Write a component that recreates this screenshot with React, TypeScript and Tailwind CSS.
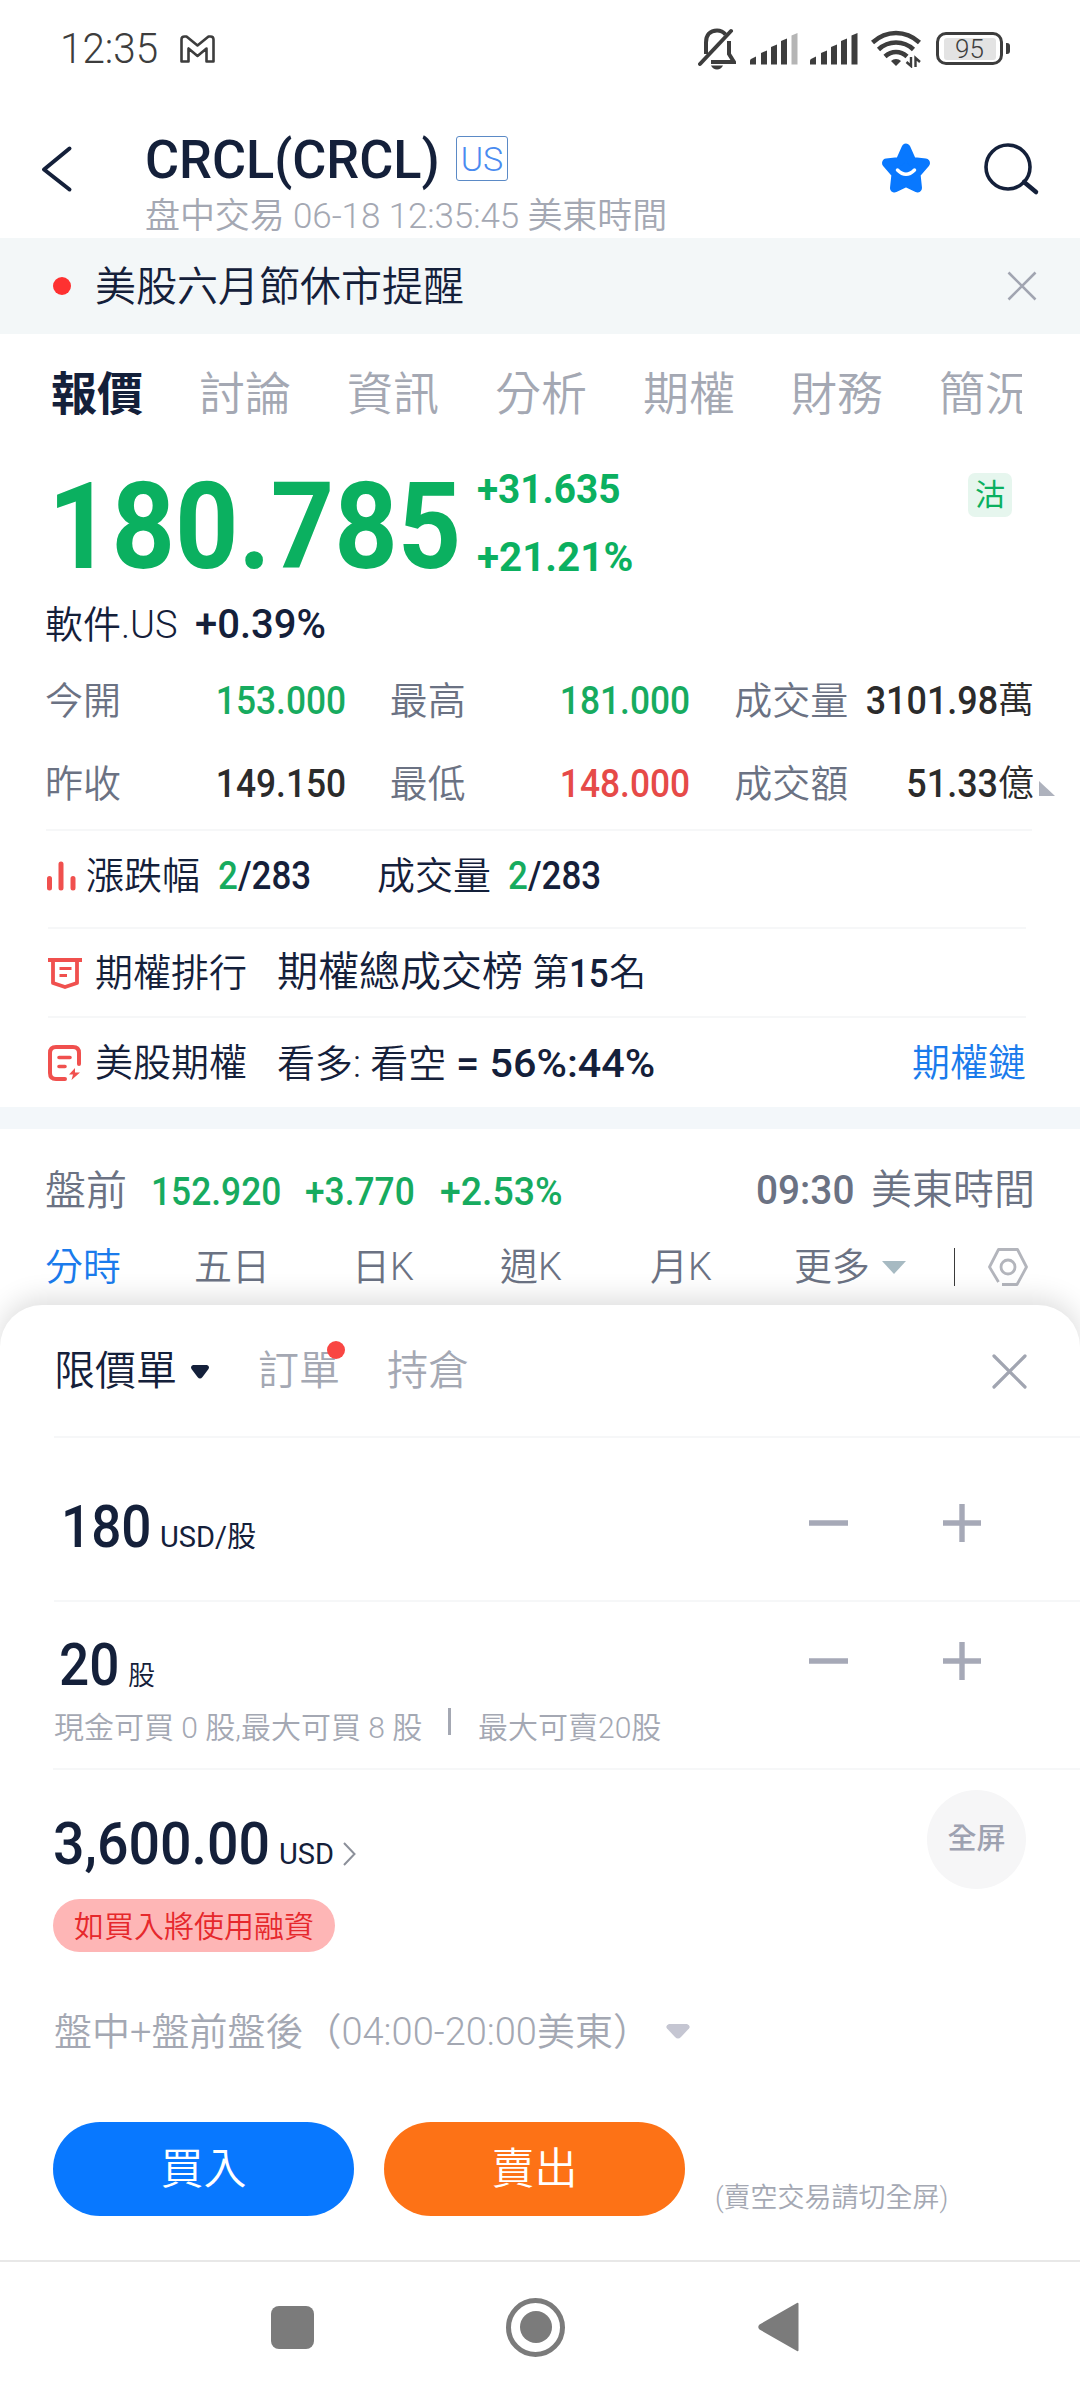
import React from "react";

const tabs = ["報價", "討論", "資訊", "分析", "期權", "財務", "簡況"];

const stats = [
  { label: "今開", value: "153.000", unit: "", color: "text-[#17ab5f]" },
  { label: "最高", value: "181.000", unit: "", color: "text-[#17ab5f]" },
  { label: "成交量", value: "3101.98", unit: "萬", color: "text-[#2b2b2b]" },
  { label: "昨收", value: "149.150", unit: "", color: "text-[#2b2b2b]" },
  { label: "最低", value: "148.000", unit: "", color: "text-[#e64a48]" },
  { label: "成交額", value: "51.33", unit: "億", color: "text-[#2b2b2b]" },
];

interface SignalProps {
  weak?: boolean;
}

const Signal: React.FC<SignalProps> = ({ weak }) => (
  <svg width="48" height="32" viewBox="0 0 48 32" fill="#3d3d3d">
    <path d="M0 31.5v-4q0-1 1-1.6l5-2.4v8z" />
    <path d="M11 31.5V20l6-2.6v14.1z" />
    <path d="M21 31.5V14l6-2.6v20.1z" />
    <path d="M31 31.5V8l6-2.6v26.1z" />
    <path d="M41.500 31.500V2.500l6-2.500v31.500z" fill={weak ? "#b5b5b5" : "#3d3d3d"} />
  </svg>
);

const StatusBar = () => (
  <div className="flex h-[97px] shrink-0 items-center pl-[60px] pr-[70px] text-[#3d3d3d]">
    <span className="w-[120px] origin-left scale-x-[0.94] text-[43px] leading-none">12:35</span>
    <svg width="35" height="28" viewBox="0 0 35 28" fill="none" stroke="#3d3d3d" strokeWidth="2.6" strokeLinejoin="round">
      <path d="M1.500 26.500V4.500q0-3 3-3h2l11 9 11-9h2q3 0 3 3v22h-7v-13l-9 7.500-9-7.500v13z" />
    </svg>
    <div className="ml-auto flex items-center">
      <svg width="38" height="42" viewBox="0 0 38 42" fill="none" stroke="#3d3d3d" strokeWidth="4">
        <path d="M8 26V14.500C8 7 12 2.500 19 2.500c3.500 0 6.500 1.500 8.500 4M31 13v13l5 8H13" />
        <path d="M2 36L33 3" strokeLinecap="round" />
        <path d="M13 37.500h12q-2 4-6 4t-6-4z" fill="#3d3d3d" stroke="none" />
      </svg>
      <span className="ml-[14px]"><Signal weak /></span>
      <span className="ml-[12px]"><Signal /></span>
      <svg className="ml-[13px]" width="50" height="38" viewBox="0 0 50 38" fill="none" stroke="#3d3d3d" strokeWidth="4.600">
        <path d="M1.500 12.500Q12 3 25 3t23.500 9.500M7.500 19.500Q15 12.500 25 12.500t17.500 7M14 26.500Q19 22 25 22t11 4.500" />
        <path d="M25 29q3 0 5 2l-5 5-5-5q2-2 5-2z" fill="#3d3d3d" stroke="none" />
        <path d="M40 27v9l-4.500-4M44.500 37v-9l4.500 4" strokeWidth="2.400" />
      </svg>
      <div className="ml-[15px] flex h-[33px] w-[67px] items-center justify-center rounded-[10px] border-[3px] border-[#3d3d3d]">
        <div className="flex h-[22px] w-[52px] items-center justify-center rounded-[3px] bg-[#e3e3e3] text-[26px] leading-none">95</div>
      </div>
      <div className="ml-[3px] h-[11px] w-[4px] rounded-r-[3px] bg-[#3d3d3d]" />
    </div>
  </div>
);

const Header = () => (
  <header className="flex h-[141px] shrink-0 items-start pl-[40px]">
    <svg className="mt-[48px]" width="34" height="48" viewBox="0 0 34 48" fill="none" stroke="#14203a" strokeWidth="4" strokeLinecap="round" strokeLinejoin="round">
      <path d="M29.500 3.500L4 24.500l25.500 20" />
    </svg>
    <div className="ml-[71px] mt-[33px]">
      <div className="flex h-[57px] items-center">
        <h1 className="w-[311px] origin-left scale-x-[0.985] whitespace-nowrap pt-[3px] text-[53px] font-medium leading-[57px] text-[#14203a]">CRCL(CRCL)</h1>
        <div className="flex h-[45px] w-[52px] items-center justify-center rounded-[3px] border border-[#5b8ac6] text-[34px] leading-none text-[#4a8bf0]">US</div>
      </div>
      <p className="mt-[5px] whitespace-nowrap text-[35px] leading-[50px] tracking-[-0.1px] text-[#a4a8b3]">盘中交易 06-18 12:35:45 美東時間</p>
    </div>
    <div className="ml-auto flex pr-[40px] pt-[45px]">
      <svg width="54" height="54" viewBox="0 0 54 54">
        <path
          d="M27 6l6 13.500 13.500 1.500-9.500 11 1.500 14L27 40.500 15.500 46l1.500-14-9.500-11 13.500-1.500z"
          fill="#0878ff"
          stroke="#0878ff"
          strokeWidth="9"
          strokeLinejoin="round"
        />
        <path d="M18.500 28q8.500 8.500 17 0" fill="none" stroke="#fff" strokeWidth="3.500" strokeLinecap="round" />
      </svg>
      <svg className="ml-[51px]" width="56" height="54" viewBox="0 0 56 54" fill="none" stroke="#14203a" strokeWidth="3.600" strokeLinecap="round">
        <circle cx="24" cy="25" r="22" />
        <path d="M40 40l12 10" strokeWidth="4.500" />
      </svg>
    </div>
  </header>
);

const Notice = () => (
  <div className="flex h-[96px] shrink-0 items-center bg-[#f3f7f8] pl-[53px] pr-[43px]">
    <span className="h-[18px] w-[18px] rounded-full bg-[#fe3131]" />
    <span className="ml-[24px] pt-[2px] text-[41px] leading-none text-[#14203a]">美股六月節休市提醒</span>
    <svg className="ml-auto" width="30" height="30" viewBox="0 0 30 30" stroke="#a1a5b1" strokeWidth="2.600">
      <path d="M1.500 1.500l27 27M28.500 1.500l-27 27" />
    </svg>
  </div>
);

const Quote = () => (
  <section className="shrink-0 text-[#14203a]">
    <nav className="ml-[51px] flex h-[120px] w-[971px] items-center overflow-hidden whitespace-nowrap text-[46px] leading-none text-[#a4a8b3]">
      {tabs.map((tab, i) => (
        <span key={tab} className={i === 0 ? "w-[148px] shrink-0 font-bold text-[#14203a]" : "w-[148px] shrink-0"}>
          {tab}
        </span>
      ))}
    </nav>

    <div className="flex h-[135px] pl-[48px] pr-[68px] font-bold text-[#0bb060]">
      <span className="w-[429px] origin-left scale-x-[0.915] whitespace-nowrap text-[121px] leading-[146px]">180.785</span>
      <div className="flex flex-col whitespace-nowrap pt-px text-[41px] leading-[68px]">
        <span className="origin-left scale-x-[0.945]">+31.635</span>
        <span className="origin-left scale-x-[0.985]">+21.21%</span>
      </div>
      <span className="ml-auto mt-[19px] flex h-[44px] w-[44px] items-center justify-center rounded-[7px] bg-[#e6f6ee] text-[30px] font-normal leading-none">沽</span>
    </div>

    <div className="flex h-[68px] items-center pl-[45px] pt-[3px] text-[38px] leading-none">
      <span className="w-[150px]">軟件.US</span>
      <span className="text-[40px] font-medium">+0.39%</span>
    </div>

    <div className="relative grid h-[172px] grid-cols-3 content-start gap-x-[45px] pl-[45px] pr-[46px] pt-[3px] text-[38px] leading-[83px]">
      {stats.map((s) => (
        <div key={s.label} className={`flex whitespace-nowrap ${s.color}`}>
          <span className="mr-auto text-[#6b7283]">{s.label}</span>
          <span className={s.unit ? "origin-right scale-x-[0.945] font-medium" : "origin-right translate-x-px scale-x-[0.93] font-medium"}>{s.value}</span>
          {s.unit && <span className="text-[36px]">{s.unit}</span>}
        </div>
      ))}
      <svg className="absolute right-[25px] top-[124px]" width="16" height="15" viewBox="0 0 16 15" fill="#aeb2bd">
        <path d="M0 0l16 15H0z" />
      </svg>
    </div>

    <div className="ml-[46px] mr-[48px] flex h-[98px] items-center border-t-2 border-[#f6f7f8] pb-[7px] text-[38px] leading-none">
      <svg width="30" height="30" viewBox="0 0 30 30" stroke="#f0504e" strokeWidth="5" strokeLinecap="round">
        <path d="M3.500 17.500v9.500M15 3v24M27 17.500v9.500" />
      </svg>
      <span className="ml-[10px] w-[132px]">漲跌幅</span>
      <span className="w-[159px] origin-left scale-x-[0.92] font-medium">
        <span className="text-[#17ab5f]">2</span>/283
      </span>
      <span className="w-[131px]">成交量</span>
      <span className="origin-left scale-x-[0.92] font-medium">
        <span className="text-[#17ab5f]">2</span>/283
      </span>
    </div>

    <div className="ml-[48px] mr-[54px] flex h-[89px] items-center border-t-2 border-[#f6f7f8] text-[38px] leading-none">
      <svg width="34" height="32" viewBox="0 0 34 32" fill="none" stroke="#f0504e" strokeWidth="3.800" strokeLinejoin="round">
        <path d="M0 3h34" />
        <path d="M5 3v23l12 4 12-4V3" />
        <path d="M11.500 11.500h12M11.500 18.500h7.500" strokeWidth="3" />
      </svg>
      <span className="ml-[13px] w-[182px]">期權排行</span>
      <span className="text-[41px]">期權總成交榜</span>
      <span className="ml-[9px] pt-[2px] text-[37px]">第</span>
      <span className="origin-left scale-x-[0.92] pt-[3px] font-medium">15</span>
      <span className="-ml-[3px] pt-[2px] text-[37px]">名</span>
    </div>

    <div className="ml-[48px] mr-[54px] flex h-[91px] items-center border-t-2 border-[#f6f7f8] text-[38px] leading-none">
      <svg width="34" height="36" viewBox="0 0 34 36" fill="none" stroke="#f0504e" strokeWidth="4" strokeLinecap="round" strokeLinejoin="round">
        <path d="M31 19V8q0-6-6-6H8Q2 2 2 8v20q0 6 6 6h9" />
        <path d="M11 12.500h11M11 21.500h6" strokeWidth="3.600" />
        <path d="M27 23l-6 6.500h4L23.500 35l8.500-7.500h-5z" fill="#f0504e" stroke="none" />
      </svg>
      <span className="ml-[13px] w-[182px]">美股期權</span>
      <span className="w-[179px] whitespace-nowrap pt-[3px]">看多: 看空</span>
      <span className="origin-left scale-x-[1.06] whitespace-nowrap pt-[3px] text-[39px] font-medium">= 56%:44%</span>
      <span className="ml-auto text-[#1a7bec]">期權鏈</span>
    </div>
  </section>
);

const Chart = () => (
  <section className="h-[198px] shrink-0 border-t-[22px] border-[#f3f7fa] text-[#6b7283]">
    <div className="flex h-[122px] items-center whitespace-nowrap pl-[45px] pr-[45px] text-[38px] leading-none">
      <span className="w-[106px] pt-[3px] text-[41px]">盤前</span>
      <span className="w-[154px] origin-left scale-x-[0.93] pt-[3px] font-medium text-[#17ab5f]">152.920</span>
      <span className="w-[135px] origin-left scale-x-[0.93] pt-[3px] font-medium text-[#17ab5f]">+3.770</span>
      <span className="origin-left scale-x-[0.985] pt-[3px] font-medium text-[#17ab5f]">+2.53%</span>
      <span className="ml-auto origin-left scale-x-[0.97] pt-px text-[40px] font-medium">09:30</span>
      <span className="ml-[14px] text-[41px]">美東時間</span>
    </div>
    <div className="flex h-[32px] items-center whitespace-nowrap pl-[45px] pr-[52px] text-[38px] leading-none">
      <span className="w-[149px] text-[#1a7bec]">分時</span>
      <span className="w-[158px]">五日</span>
      <span className="w-[148px]">日K</span>
      <span className="w-[150px]">週K</span>
      <span className="w-[144px]">月K</span>
      <span className="w-[88px]">更多</span>
      <svg width="24" height="13" viewBox="0 0 24 13" fill="#a7bac2">
        <path d="M0 0h24L12 13z" />
      </svg>
      <span className="ml-auto h-[38px] w-px bg-[#3a3a3a]" />
      <svg className="ml-[33px]" width="40" height="38" viewBox="0 0 40 38" fill="none" stroke="#b3b5bc" strokeWidth="2.800" strokeLinejoin="round">
        <path d="M14 36.500h15l9.500-17.500L29.500 1.500H10.500L1.500 19l9 15" />
        <circle cx="20" cy="19" r="7" />
      </svg>
    </div>
  </section>
);

const Stepper = () => (
  <div className="flex gap-[95px] pr-[99px]">
    <svg width="39" height="38" viewBox="0 0 39 38" stroke="#a6a9b7" strokeWidth="5.400">
      <path d="M0 19h39" />
    </svg>
    <svg width="38" height="38" viewBox="0 0 38 38" stroke="#a6a9b7" strokeWidth="5.400">
      <path d="M0 19h38M19 0v38" />
    </svg>
  </div>
);

const OrderSheet = () => (
  <section className="relative h-[955px] shrink-0 rounded-t-[42px] bg-white text-[#14203a] shadow-[0_-6px_28px_rgba(0,0,0,0.14)]">
    <div className="flex h-[131px] items-center pl-[54px] pr-[53px] pt-[2px] text-[41px] leading-none">
      <span className="w-[137px] whitespace-nowrap">限價單</span>
      <svg width="18" height="14" viewBox="0 0 18 14" fill="#14203a">
        <path d="M2 0h14q3 1 1.500 4l-6 8Q9 15 6.500 12l-6-8Q-1 1 2 0z" />
      </svg>
      <span className="relative ml-[49px] w-[129px] text-[#a4a8b3]">
        訂單
        <span className="absolute left-[69px] top-[-10px] h-[18px] w-[18px] rounded-full bg-[#f94643]" />
      </span>
      <span className="text-[#a4a8b3]">持倉</span>
      <svg className="ml-auto" width="35" height="35" viewBox="0 0 35 35" stroke="#a1a5b1" strokeWidth="3.200" strokeLinecap="round">
        <path d="M2 2l31 31M33 2L2 33" />
      </svg>
    </div>

    <div className="ml-[54px] flex h-[164px] items-center justify-between border-t-2 border-[#f6f7f8] pt-[8px]">
      <div className="flex items-baseline pl-[7px] pt-[9px]">
        <span className="w-[99px] origin-left scale-x-[0.9] text-[59px] font-medium leading-[64px]">180</span>
        <span className="text-[29px] font-normal">USD/股</span>
      </div>
      <Stepper />
    </div>

    <div className="ml-[54px] h-[168px] border-t-2 border-[#f6f7f8]">
      <div className="flex h-[118px] items-center justify-between">
        <div className="flex items-baseline pl-[5px] pt-[8px]">
          <span className="w-[69px] origin-left scale-x-[0.9] text-[59px] font-medium leading-[64px]">20</span>
          <span className="text-[27px]">股</span>
        </div>
        <Stepper />
      </div>
      <div className="-mt-[12px] flex items-center whitespace-nowrap text-[30px] leading-[22px] text-[#a4a8b3]">
        <span className="w-[394px]">現金可買 0 股,最大可買 8 股</span>
        <span className="mb-[12px] h-[27px] w-[3px] bg-[#a4a8b3]" />
        <span className="ml-[27px]">最大可賣20股</span>
      </div>
    </div>

    <div className="ml-[53px] flex h-[131px] items-start justify-between border-t-2 border-[#f6f7f8] pr-[54px]">
      <div className="flex items-baseline pt-[42px]">
        <span className="w-[226px] origin-left scale-x-[0.94] text-[59px] font-medium leading-[64px]">3,600.00</span>
        <span className="w-[64px] text-[29px] font-normal">USD</span>
        <svg className="translate-y-[2px]" width="13" height="24" viewBox="0 0 13 24" fill="none" stroke="#8c909a" strokeWidth="2">
          <path d="M1 1l10.500 11L1 23" />
        </svg>
      </div>
      <span className="mt-[20px] flex h-[99px] w-[99px] items-center justify-center rounded-full bg-[#f6f6f7] text-[29px] font-medium leading-none text-[#9da1b0]">全屏</span>
    </div>

    <div className="ml-[53px] flex h-[53px] w-[282px] items-center justify-center rounded-full bg-[#feb6b6] pt-[3px] text-[30px] leading-none text-[#e6282c]">如買入將使用融資</div>

    <div className="flex h-[158px] items-center pl-[54px] text-[38px] leading-none text-[#a4a8b3]">
      <span className="w-[612px] whitespace-nowrap pt-[2px]">盤中+盤前盤後（04:00-20:00美東）</span>
      <svg width="24" height="15" viewBox="0 0 24 15" fill="#c5c6d2">
        <path d="M3 0h18q4 1.500 2 4.500l-8 8.500q-3 3-6 0L1 4.500Q-1 1.500 3 0z" />
      </svg>
    </div>

    <div className="mt-[12px] flex items-end pl-[53px]">
      <button className="h-[94px] w-[301px] rounded-full bg-[#0878ff] text-[43px] leading-none text-white">買入</button>
      <button className="ml-[30px] h-[94px] w-[301px] rounded-full bg-[#fd7216] text-[43px] leading-none text-white">賣出</button>
      <span className="ml-[30px] whitespace-nowrap text-[27px] leading-[35px] text-[#a4a8b3]">(賣空交易請切全屏)</span>
    </div>
  </section>
);

const NavBar = () => (
  <div className="relative flex h-[140px] shrink-0 items-center border-t-2 border-[#e8e8e8] bg-white pb-[8px] pl-[271px]">
    <span className="h-[43px] w-[43px] rounded-[8px] bg-[#7b7b7b]" />
    <span className="ml-[192px] flex h-[59px] w-[59px] items-center justify-center rounded-full border-[5px] border-[#7b7b7b]">
      <span className="h-[32px] w-[32px] rounded-full bg-[#7b7b7b]" />
    </span>
    <svg className="ml-[193px]" width="41" height="50" viewBox="0 0 41 50" fill="#7b7b7b">
      <path d="M39 1q1.500-1 1.500 1v46q0 2-1.500 1L1.500 27.500q-2.500-2.500 0-5z" />
    </svg>
  </div>
);

export default function App() {
  return (
    <div className="flex h-[2400px] w-[1080px] flex-col overflow-hidden bg-white font-['Roboto','Noto_Sans_CJK_TC',sans-serif] font-[350]">
      <StatusBar />
      <Header />
      <Notice />
      <Quote />
      <Chart />
      <OrderSheet />
      <NavBar />
    </div>
  );
}
